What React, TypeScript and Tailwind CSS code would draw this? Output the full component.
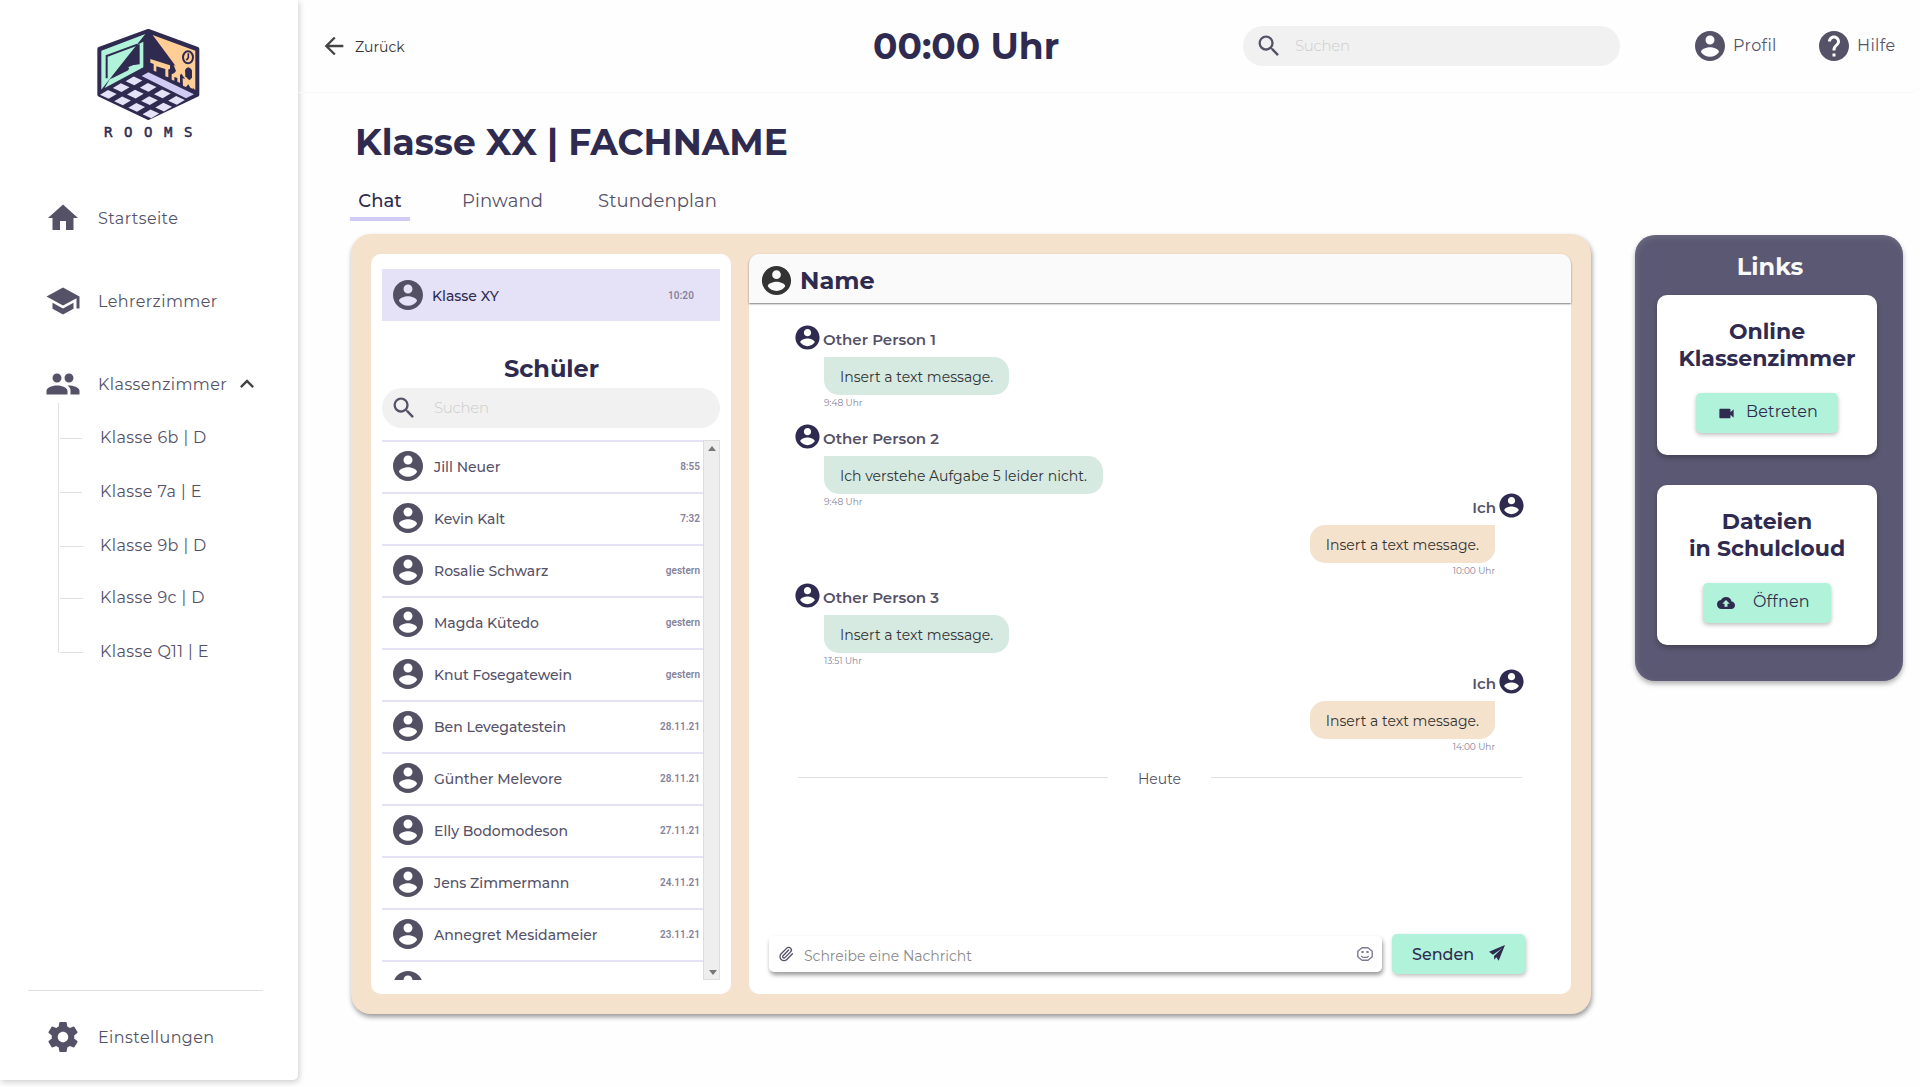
import type { ReactNode } from "react";
import {
  MdArrowBack,
  MdCloudUpload,
  MdExpandLess,
  MdHelp,
  MdHome,
  MdPeople,
  MdSchool,
  MdSearch,
  MdVideocam,
} from "react-icons/md";
import { Paperclip } from "lucide-react";

function Avatar({ className }: { className: string }) {
  return (
    <svg viewBox="0 0 24 24" fill="currentColor" className={`shrink-0 ${className}`}>
      <path d="M12 2C6.48 2 2 6.48 2 12s4.48 10 10 10 10-4.48 10-10S17.52 2 12 2zm0 3c1.66 0 3 1.34 3 3s-1.34 3-3 3-3-1.34-3-3 1.34-3 3-3zm0 14.2c-2.5 0-4.71-1.28-6-3.22.03-1.99 4-3.08 6-3.08 1.99 0 5.97 1.09 6 3.08-1.29 1.94-3.5 3.22-6 3.22z" />
    </svg>
  );
}

function Gear({ className }: { className: string }) {
  return (
    <svg viewBox="0 0 24 24" fill="currentColor" className={`shrink-0 ${className}`}>
      <path d="M19.43 12.98c.04-.32.07-.64.07-.98s-.03-.66-.07-.98l2.11-1.65c.19-.15.24-.42.12-.64l-2-3.46c-.12-.22-.39-.3-.61-.22l-2.49 1c-.52-.4-1.08-.73-1.69-.98l-.38-2.65C14.46 2.18 14.25 2 14 2h-4c-.25 0-.46.18-.49.42l-.38 2.65c-.61.25-1.17.59-1.69.98l-2.49-1c-.23-.09-.49 0-.61.22l-2 3.46c-.13.22-.07.49.12.64l2.11 1.65c-.04.32-.07.65-.07.98s.03.66.07.98l-2.11 1.65c-.19.15-.24.42-.12.64l2 3.46c.12.22.39.3.61.22l2.49-1c.52.4 1.08.73 1.69.98l.38 2.65c.03.24.24.42.49.42h4c.25 0 .46-.18.49-.42l.38-2.65c.61-.25 1.17-.59 1.69-.98l2.49 1c.23.09.49 0 .61-.22l2-3.46c.12-.22.07-.49-.12-.64l-2.11-1.65zM12 15.5c-1.93 0-3.5-1.57-3.5-3.5s1.57-3.5 3.5-3.5 3.5 1.57 3.5 3.5-1.57 3.5-3.5 3.5z" />
    </svg>
  );
}

const tiles = [0, 1, 2].flatMap((row) =>
  [0, 1, 2, 3].map((col) => [162 + col * 42.5 - row * 38.5, 197.5 + col * 19.5 + row * 20.2]),
);

function Logo() {
  return (
    <svg viewBox="0 0 420 324" className="h-[108px] w-[140px] shrink-0">
      <path
        d="M205 48 352 102V239L205 309 58 239V102Z"
        fill="#2f2b50"
        stroke="#2f2b50"
        strokeWidth="12"
        strokeLinejoin="round"
      />
      <path d="M64 107 196 57 92 188 64 224Z" fill="#b0f2da" />
      <path d="M80 190V123L172 89" fill="none" stroke="#2f2b50" strokeWidth="6" />
      <path d="M172 89 179 88V148L160 150 144 155 148 162 104 181 88 194 74 219 190 157V80Z" fill="#b0f2da" />
      <path d="M176 93 92 192 145 166 144 157 160 149 177 146Z" fill="#2f2b50" />
      <path d="M218 60 346 107V226L318 195Z" fill="#ffce96" />
      <path d="M211 132 270 151V162L265 163V187L256 184V162L229 154V170L221 167V147L211 143Z" fill="#ffce96" />
      <path d="M281 150 296 155 306 174 300 180V203L292 200V189L283 186V197L275 194V178L283 174 288 168Z" fill="#ffce96" />
      <path d="M308 190 322 193 334 197 340 222 331 218 325 208 318 216 309 212Z" fill="#ffce96" />
      <ellipse cx="324" cy="127" rx="15" ry="18" fill="#ffce96" stroke="#2f2b50" strokeWidth="6" />
      <path d="M325 115V128L319 136" fill="none" stroke="#2f2b50" strokeWidth="5" />
      <path d="M315 165Q325 148 336 166V188L328 196 316 184Z" fill="#2f2b50" />
      <path d="M205 172 342 238 318 250 185 183Z" fill="#cfcbf5" />
      {tiles.map(([x, y]) => (
        <path
          key={`${x}-${y}`}
          d="M-1 -13 25 -1 1 13 -25 1Z"
          transform={`translate(${x} ${y})`}
          fill="#e5e2f8"
        />
      ))}
    </svg>
  );
}

function NavItem({ icon, label, children }: { icon: ReactNode; label: string; children?: ReactNode }) {
  return (
    <div className="flex h-9 items-center pl-[45px] text-[#555268]">
      {icon}
      <span className="ml-[17px] pt-px whitespace-nowrap tracking-[0.42px]">{label}</span>
      {children}
    </div>
  );
}

const rooms = [
  { label: "Klasse 6b | D", height: "h-[54px]", line: "w-[22px]" },
  { label: "Klasse 7a | E", height: "h-[54px]", line: "w-[22px]" },
  { label: "Klasse 9b | D", height: "h-[54px]", line: "w-[23px]" },
  { label: "Klasse 9c | D", height: "h-[50px]", line: "w-[23px]" },
  { label: "Klasse Q11 | E", height: "h-[58px]", line: "w-[23px]" },
];

function Sidebar() {
  return (
    <aside className="flex h-[1080px] w-[298px] shrink-0 flex-col rounded-br-[5px] bg-white pt-[15px] shadow-[1px_2px_6px_rgba(0,0,0,0.2)]">
      <div className="flex flex-col pl-20">
        <Logo />
        <span className="pt-px pl-6 font-['DejaVu_Sans_Mono',monospace] text-sm leading-4 tracking-[11.6px] text-[#2f2b50] [-webkit-text-stroke:0.5px_#2f2b50]">
          ROOMS
        </span>
      </div>
      <nav className="mt-[60px] flex flex-col gap-[47px]">
        <NavItem icon={<MdHome className="size-9" />} label="Startseite" />
        <NavItem icon={<MdSchool className="size-9" />} label="Lehrerzimmer" />
        <NavItem icon={<MdPeople className="size-9" />} label="Klassenzimmer">
          <MdExpandLess className="ml-[6px] size-7 text-[#444]" />
        </NavItem>
      </nav>
      <div className="mt-px flex pl-[58px]">
        <div className="h-[250px] w-px bg-[#e0e0e0]" />
        <ul className="pt-2">
          {rooms.map((room) => (
            <li key={room.label} className={`flex items-center pl-px ${room.height}`}>
              <span className="w-[40px]">
                <span className={`block h-px bg-[#e0e0e0] ${room.line}`} />
              </span>
              <span className="tracking-[0.4px] whitespace-nowrap text-[#555268]">{room.label}</span>
            </li>
          ))}
        </ul>
      </div>
      <div className="mt-auto mr-[35px] ml-7 h-px bg-[#e0e0e0]" />
      <div className="mt-7 pb-[25px]">
        <NavItem icon={<Gear className="size-9" />} label="Einstellungen" />
      </div>
    </aside>
  );
}

function SearchField({ className, gap }: { className: string; gap: string }) {
  return (
    <div className={`flex h-10 items-center rounded-full bg-[#f1f1f1] ${className}`}>
      <MdSearch className="size-7 shrink-0 text-[#555268]" />
      <span className={`text-[15px] font-light tracking-[-0.3px] text-[#ccc] ${gap}`}>Suchen</span>
    </div>
  );
}

function Header() {
  return (
    <header className="flex h-[93px] items-center rounded-br-[10px] border-b border-[#f8f8f8] pl-[22px] text-[#555268]">
      <div className="flex w-[120px] items-center">
        <MdArrowBack className="size-7 text-[#444]" />
        <span className="ml-[7px] pt-px text-sm text-[#333]">Zurück</span>
      </div>
      <div className="ml-[433px] w-[370px] text-4xl leading-10 font-bold text-[#2f2b50]">00:00 Uhr</div>
      <SearchField className="w-[377px] pl-3" gap="ml-3" />
      <div className="ml-[72px] flex w-[124px] items-center">
        <Avatar className="size-9" />
        <span className="ml-[5px] tracking-[0.4px]">Profil</span>
      </div>
      <div className="flex items-center">
        <MdHelp className="size-9" />
        <span className="ml-[5px] tracking-[0.4px]">Hilfe</span>
      </div>
    </header>
  );
}

const students = [
  { name: "Jill Neuer", time: "8:55" },
  { name: "Kevin Kalt", time: "7:32" },
  { name: "Rosalie Schwarz", time: "gestern" },
  { name: "Magda Kütedo", time: "gestern" },
  { name: "Knut Fosegatewein", time: "gestern" },
  { name: "Ben Levegatestein", time: "28.11.21" },
  { name: "Günther Melevore", time: "28.11.21" },
  { name: "Elly Bodomodeson", time: "27.11.21" },
  { name: "Jens Zimmermann", time: "24.11.21" },
  { name: "Annegret Mesidameier", time: "23.11.21" },
  { name: "", time: "" },
];

function StudentPanel() {
  return (
    <section className="flex w-[360px] flex-col rounded-[10px] bg-white px-[11px] pt-[15px]">
      <div className="flex h-[52px] items-center bg-[#e5e2f8] pl-2">
        <Avatar className="size-9 text-[#535064]" />
        <span className="ml-[6px] pt-px text-sm font-medium text-[#2f2b50]">Klasse XY</span>
        <span className="mr-[26px] ml-auto pt-px font-[Roboto,sans-serif] text-[10px] font-semibold tracking-[0.1px] text-[#85829b]">
          10:20
        </span>
      </div>
      <h2 className="mt-8 pl-px text-center text-2xl leading-8 font-bold text-[#2f2b50]">Schüler</h2>
      <SearchField className="mt-[3px] pl-2" gap="ml-4" />
      <div className="mt-3 flex h-[540px]">
        <ul className="w-[321px] overflow-hidden">
          {students.map((s, i) => (
            <li key={i} className="flex h-[52px] items-center border-t-2 border-[#e5e2f8] pr-[3px] pb-[2px] pl-2">
              <Avatar className="size-9 text-[#535064]" />
              <span className="ml-2 pt-px text-sm font-medium text-[#555268]">{s.name}</span>
              <span className="ml-auto pt-px font-[Roboto,sans-serif] text-[10px] font-semibold text-[#85829b]">
                {s.time}
              </span>
            </li>
          ))}
        </ul>
        <div className="flex w-[17px] flex-col items-center justify-between border border-[#ddd] bg-[#eee] pt-[5px] pb-[4px]">
          <span className="border-x-[4.5px] border-b-[5px] border-x-transparent border-b-[#777]" />
          <span className="ml-[2px] border-x-[4.5px] border-t-[5px] border-x-transparent border-t-[#777]" />
        </div>
      </div>
    </section>
  );
}

function Incoming({ name, text, time, className }: { name: string; text: string; time: string; className: string }) {
  return (
    <div className={`flex items-start ${className}`}>
      <Avatar className="size-[29px] text-[#2f2b50]" />
      <div className="ml-px flex flex-col items-start pt-[7px]">
        <span className="text-[15px] leading-5 font-semibold text-[#555268]">{name}</span>
        <p className="mt-[7px] ml-px h-[38px] rounded-[15px] rounded-tl-none bg-[#d6eae2] px-4 text-sm leading-[40px] tracking-[0.02px] text-[#333]">
          {text}
        </p>
        <span className="mt-px ml-px text-[9px] leading-[14px] text-[#85829b]">{time}</span>
      </div>
    </div>
  );
}

function Outgoing({ time, className }: { time: string; className: string }) {
  return (
    <div className={`flex items-start justify-end ${className}`}>
      <div className="mr-[2px] flex flex-col items-end pt-[7px]">
        <span className="-mr-px text-[15px] leading-5 font-semibold text-[#555268]">Ich</span>
        <p className="mt-[7px] h-[38px] rounded-[15px] rounded-tr-none bg-[#f5e2cd] px-4 text-sm leading-[40px] tracking-[0.02px] text-[#333]">
          Insert a text message.
        </p>
        <span className="mt-px text-[9px] leading-[14px] text-[#85829b]">{time}</span>
      </div>
      <Avatar className="size-[29px] text-[#2f2b50]" />
    </div>
  );
}

function ChatPanel() {
  return (
    <section className="flex w-[822px] flex-col rounded-[10px] bg-white">
      <div className="flex h-[49px] items-center rounded-t-[10px] bg-[#fafafa] pt-[3px] pl-[10px] shadow-[0_1px_2px_rgba(0,0,0,0.5)]">
        <Avatar className="size-[35px] text-[#333]" />
        <h2 className="ml-[6px] pt-px text-2xl leading-8 font-bold text-[#2f2b50]">Name</h2>
      </div>
      <div className="flex flex-1 flex-col pt-5 pr-[45px] pl-11">
        <Incoming className="h-[99px]" name="Other Person 1" text="Insert a text message." time="9:48 Uhr" />
        <Incoming className="h-[69px]" name="Other Person 2" text="Ich verstehe Aufgabe 5 leider nicht." time="9:48 Uhr" />
        <Outgoing className="h-[90px]" time="10:00 Uhr" />
        <Incoming className="h-[86px]" name="Other Person 3" text="Insert a text message." time="13:51 Uhr" />
        <Outgoing className="h-[100px]" time="14:00 Uhr" />
        <div className="mr-[4px] ml-[5px] flex h-5 items-center justify-between">
          <span className="h-px w-[310px] bg-[#e0e0e0]" />
          <span className="pt-[3px] text-sm text-[#555268]">Heute</span>
          <span className="h-px w-[311px] bg-[#e0e0e0]" />
        </div>
      </div>
      <div className="mb-5 flex items-center gap-[10px] pl-5">
        <div className="flex h-9 w-[613px] items-center rounded-[5px] bg-white pr-[9px] pl-[9px] shadow-[1px_3px_4px_rgba(0,0,0,0.4)]">
          <Paperclip className="size-4 text-[#555268]" strokeWidth={2} />
          <span className="ml-[10px] pt-[3px] text-sm text-[#8a8a8a]">Schreibe eine Nachricht</span>
          <svg viewBox="0 0 16 14" className="ml-auto h-[14px] w-4" fill="none" stroke="#7d7a92">
            <path d="M5 0.7H11L15.2 4.3V9.7L11 13.3H5L0.8 9.7V4.3Z" strokeWidth="1.4" strokeLinejoin="round" />
            <path d="M4.4 5H6.6M9.4 5H11.6" strokeWidth="1.8" />
            <path d="M4.2 9 6 10.4H10L11.8 9" strokeWidth="1.3" />
          </svg>
        </div>
        <button className="flex h-10 w-[133px] items-center rounded-[5px] bg-[#b0f2da] pl-5 text-[#2f2b50] shadow-[1px_2px_4px_rgba(0,0,0,0.25)]">
          <span className="pt-px text-base font-medium">Senden</span>
          <svg viewBox="0 0 48 48" className="mb-[2px] ml-[15px] size-4" fill="currentColor">
            <path d="M48 0 0 20 12 29 40 9 15 33 16 44 22 37 29 47Z" />
          </svg>
        </button>
      </div>
    </section>
  );
}

function LinkCard({ lines, children }: { lines: string[]; children: ReactNode }) {
  return (
    <div className="flex h-40 w-[220px] flex-col items-center rounded-[10px] bg-white pt-[23px] shadow-[0_3px_5px_rgba(0,0,0,0.25)]">
      <h3 className="text-center text-[22px] leading-[27px] font-bold text-[#2f2b50]">
        {lines[0]}
        <br />
        {lines[1]}
      </h3>
      {children}
    </div>
  );
}

function LinksPanel() {
  return (
    <aside className="mt-px flex h-[446px] w-[268px] flex-col rounded-[20px] bg-[#5b5873] pl-[22px] shadow-[0_3px_5px_rgba(0,0,0,0.3),inset_1px_2px_6px_rgba(255,255,255,0.12)]">
      <h2 className="mt-4 mb-3 pr-5 text-center text-2xl leading-8 font-bold text-[#fafafa]">Links</h2>
      <div className="flex flex-col gap-[30px]">
        <LinkCard lines={["Online", "Klassenzimmer"]}>
          <button className="mt-[21px] flex h-10 w-[142px] items-center rounded-[5px] bg-[#b0f2da] pl-[21px] text-[#2f2b50] shadow-[0_2px_4px_rgba(0,0,0,0.25)]">
            <MdVideocam className="mt-px size-[19px]" />
            <span className="ml-[10px] pb-[2px] tracking-[0.15px]">Betreten</span>
          </button>
        </LinkCard>
        <LinkCard lines={["Dateien", "in Schulcloud"]}>
          <button className="mt-[21px] flex h-10 w-[128px] items-center rounded-[5px] bg-[#b0f2da] pl-[14px] text-[#2f2b50] shadow-[0_2px_4px_rgba(0,0,0,0.25)]">
            <MdCloudUpload className="size-[18px]" />
            <span className="ml-[18px] pb-[2px] tracking-[0.2px]">Öffnen</span>
          </button>
        </LinkCard>
      </div>
    </aside>
  );
}

export default function App() {
  return (
    <div className="flex h-[1087px] w-[1920px] overflow-hidden bg-[#fefefe] font-[Montserrat,Inter,sans-serif]">
      <Sidebar />
      <div className="flex flex-1 flex-col">
        <Header />
        <main className="pl-[53px]">
          <h1 className="mt-[29px] pl-[4px] text-4xl leading-10 font-bold text-[#2f2b50]">Klasse XX | FACHNAME</h1>
          <div className="mt-6 -ml-px flex h-[35px] text-lg leading-[30px] text-[#555268]">
            <span className="w-[60px] border-b-4 border-[#cfcbf5] text-center font-medium text-[#2f2b50]">Chat</span>
            <span className="ml-[52px] w-[136px] tracking-[0.12px]">Pinwand</span>
            <span className="tracking-[0.12px]">Stundenplan</span>
          </div>
          <div className="mt-[13px] flex gap-11">
            <div className="flex h-[780px] w-[1240px] gap-[18px] rounded-[20px] bg-[#f5e2cd] p-5 shadow-[1px_3px_5px_rgba(0,0,0,0.4)]">
              <StudentPanel />
              <ChatPanel />
            </div>
            <LinksPanel />
          </div>
        </main>
      </div>
    </div>
  );
}
